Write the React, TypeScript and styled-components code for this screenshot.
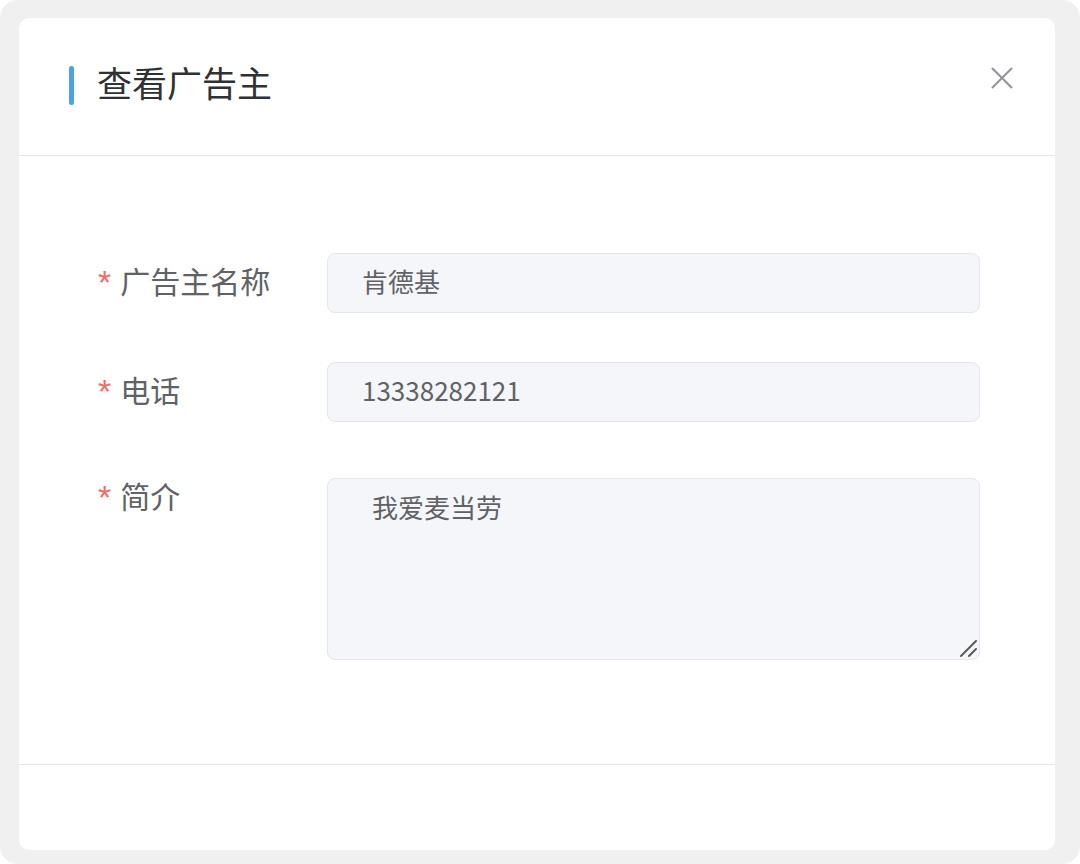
import React from "react";
import styled, { createGlobalStyle } from "styled-components";

const GlobalStyle = createGlobalStyle`
  html, body { margin: 0; padding: 0; background: #ffffff; }
  * { box-sizing: border-box; }
  body { font-family: "Noto Sans CJK SC", "Noto Sans", sans-serif; }
`;

const Frame = styled.div`
  width: 1080px;
  height: 864px;
  background: #f0f0f0;
  border-radius: 18px;
  padding: 18px 25px 14px 19px;
  display: flex;
`;

const Card = styled.div`
  flex: 1;
  background: #ffffff;
  border-radius: 10px;
  display: flex;
  flex-direction: column;
  overflow: hidden;
`;

const Header = styled.div`
  height: 138px;
  flex: none;
  border-bottom: 1px solid #e6e6e6;
  display: flex;
  align-items: center;
  justify-content: space-between;
  padding: 0 42px 0 50px;
`;

const TitleWrap = styled.div`
  display: flex;
  align-items: center;
  gap: 23px;
  margin-top: -3px;
`;

const TitleBar = styled.span`
  width: 5px;
  height: 39px;
  border-radius: 3px;
  background: #4aa3e6;
`;

const Title = styled.h2`
  margin: 0;
  padding-bottom: 6px;
  font-size: 35px;
  font-weight: 400;
  line-height: 48px;
  color: #303133;
`;

const CloseButton = styled.button`
  align-self: flex-start;
  margin-top: 49px;
  width: 22px;
  height: 22px;
  padding: 0;
  border: none;
  background: transparent;
  cursor: pointer;
  display: flex;
  align-items: center;
  justify-content: center;
`;

const Body = styled.div`
  flex: 1;
  padding: 97px 75px 0 79px;
  display: flex;
  flex-direction: column;
`;

const Row = styled.div<{ $gap: number; $align?: string }>`
  display: flex;
  align-items: ${(p) => p.$align || "center"};
  margin-bottom: ${(p) => p.$gap}px;
`;

const Label = styled.label<{ $shift?: number }>`
  width: 229px;
  flex: none;
  display: flex;
  align-items: center;
  height: 60px;
  padding-bottom: 6px;
  font-size: 30px;
  color: #606266;
  margin-top: ${(p) => p.$shift || 0}px;
`;

const Star = styled.span`
  display: inline-block;
  font-family: "Liberation Sans", Arial, sans-serif;
  color: #f26b6b;
  font-size: 34px;
  line-height: 34px;
  height: 34px;
  margin-right: 9px;
  margin-top: 4px;
`;

const Input = styled.input`
  flex: 1;
  height: 60px;
  border: 1px solid #e4e7ed;
  border-radius: 8px;
  background: #f5f6f9;
  padding: 0 20px 6px 34px;
  font-family: "Noto Sans CJK SC", "Noto Sans", sans-serif;
  font-size: 26px;
  color: #606266;
  outline: none;
`;

const AreaWrap = styled.div`
  flex: 1;
  position: relative;
  display: flex;
`;

const TextArea = styled.textarea`
  flex: 1;
  height: 182px;
  border: 1px solid #e4e7ed;
  border-radius: 8px;
  background: #f5f6f9;
  padding: 8px 20px 0 44px;
  font-family: "Noto Sans CJK SC", "Noto Sans", sans-serif;
  font-size: 26px;
  line-height: 40px;
  color: #606266;
  outline: none;
  resize: none;
`;

const Grip = styled.svg`
  position: absolute;
  right: 2px;
  bottom: 2px;
  pointer-events: none;
`;

const Footer = styled.div`
  height: 86px;
  flex: none;
  border-top: 1px solid #e6e6e6;
`;

export default function App() {
  return (
    <>
      <GlobalStyle />
      <Frame>
        <Card>
          <Header>
            <TitleWrap>
              <TitleBar />
              <Title>查看广告主</Title>
            </TitleWrap>
            <CloseButton aria-label="关闭">
              <svg width="22" height="22" viewBox="0 0 22 22">
                <path d="M1 1 L21 21 M21 1 L1 21" stroke="#909399" strokeWidth="2" fill="none" />
              </svg>
            </CloseButton>
          </Header>
          <Body>
            <Row $gap={49}>
              <Label><Star>*</Star>广告主名称</Label>
              <Input readOnly value="肯德基" />
            </Row>
            <Row $gap={56}>
              <Label><Star>*</Star>电话</Label>
              <Input readOnly value="13338282121" />
            </Row>
            <Row $gap={0} $align="flex-start">
              <Label $shift={-10}><Star>*</Star>简介</Label>
              <AreaWrap>
                <TextArea readOnly value="我爱麦当劳" />
                <Grip width="18" height="18" viewBox="0 0 18 18">
                  <path d="M1 16 L16 1 M9 16 L16 9" stroke="#5a5a5a" strokeWidth="2" strokeLinecap="round" fill="none" />
                </Grip>
              </AreaWrap>
            </Row>
          </Body>
          <Footer />
        </Card>
      </Frame>
    </>
  );
}
